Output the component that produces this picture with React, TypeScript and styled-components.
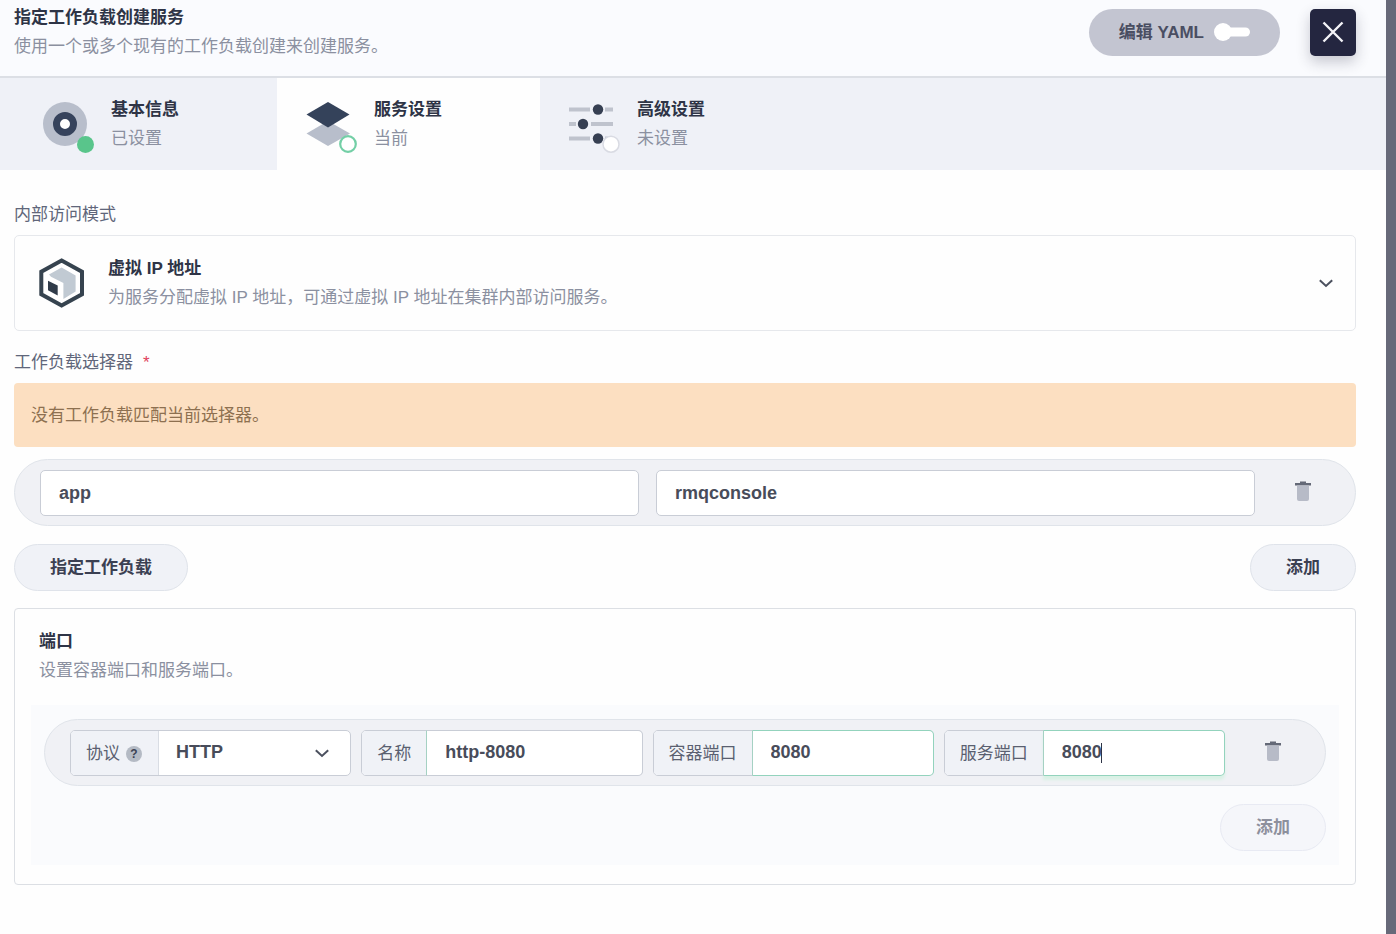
import React from 'react';
import styled, { createGlobalStyle, css } from 'styled-components';

const GlobalStyle = createGlobalStyle`
  *, *::before, *::after { box-sizing: border-box; }
  body {
    margin: 0;
    background: #676979;
    color: #2e3446;
    font-family: "Liberation Sans", "Noto Sans CJK SC", sans-serif;
    font-size: 17px;
    line-height: 29px;
  }
  button, input, select { font: inherit; color: inherit; margin: 0; }
  button { cursor: pointer; }
  h1, h2, h3, p { margin: 0; font-size: 17px; }
`;

const Panel = styled.main`
  min-height: 100vh;
  margin-right: 10px;
  background: #fefefe;
`;

const Header = styled.header`
  display: flex;
  align-items: center;
  gap: 30px;
  padding: 3px 30px 15px 14px;
  border-bottom: 2px solid #dcdfe5;
  background: #fafbfe;
`;

const TextBlock = styled.div`
  flex: 1;
  min-width: 0;
`;

const Title = styled.h1`
  font-weight: 700;
`;

const Muted = styled.p`
  color: #8b90a0;
`;

const YamlButton = styled.button`
  display: flex;
  align-items: center;
  gap: 10px;
  height: 47px;
  padding: 0 30px;
  border: 0;
  border-radius: 24px;
  background: #c3c5d1;
  color: #4a4e62;
  font-weight: 700;
`;

const CloseButton = styled.button`
  display: grid;
  place-items: center;
  width: 46px;
  height: 47px;
  padding: 0;
  border: 0;
  border-radius: 5px;
  background: #242640;
  color: #f4f4f8;
  box-shadow: 0 6px 14px rgba(36, 38, 64, 0.24);
`;

const Tabs = styled.nav`
  display: flex;
  padding-left: 14px;
  background: #eff1f7;
`;

const Tab = styled.button<{ $active?: boolean }>`
  display: flex;
  align-items: center;
  gap: 17px;
  width: 263px;
  height: 92px;
  padding: 0 22px;
  border: 0;
  text-align: left;
  background: ${(p) => (p.$active ? '#fefefe' : 'transparent')};
`;

const TabTitle = styled.strong`
  display: block;
`;

const TabStatus = styled.span`
  display: block;
  color: #8b90a0;
`;

const Content = styled.form`
  padding: 30px 30px 48px 14px;
`;

const FieldLabel = styled.h2`
  margin-bottom: 6px;
  font-weight: 400;
  color: #60667a;
`;

const Required = styled.span`
  margin-left: 10px;
  color: #e0415c;
`;

const ModeButton = styled.button`
  display: flex;
  align-items: center;
  gap: 17px;
  width: 100%;
  height: 96px;
  margin-bottom: 17px;
  padding: 0 18px;
  border: 1px solid #e6e8ec;
  border-radius: 5px;
  background: #fefefe;
  text-align: left;
`;

const Alert = styled.div`
  margin-bottom: 12px;
  padding: 18px 17px 17px;
  border-radius: 4px;
  background: #fcdfc1;
  color: #8d7050;
`;

const Pill = styled.div<{ $gap: number }>`
  display: flex;
  align-items: center;
  gap: ${(p) => p.$gap}px;
  height: 67px;
  padding: 0 28px 0 25px;
  border: 1px solid #e0e4ea;
  border-radius: 34px;
  background: #f0f1f5;
`;

const fieldBox = css`
  height: 46px;
  border: 1px solid #c9cdd6;
  border-radius: 5px;
  background: #fff;
`;

const valueText = css`
  color: #484c5a;
  font-size: 18px;
  font-weight: 700;
  outline: 0;
`;

const PlainInput = styled.input`
  ${fieldBox}
  ${valueText}
  flex: 1;
  min-width: 0;
  padding: 2px 18px 0;
`;

const IconButton = styled.button<{ $space: number }>`
  display: grid;
  place-items: center;
  width: 48px;
  height: 46px;
  margin-left: ${(p) => p.$space}px;
  padding: 0 0 4px;
  border: 0;
  background: transparent;
`;

const Actions = styled.div<{ $end?: boolean }>`
  display: flex;
  justify-content: ${(p) => (p.$end ? 'flex-end' : 'space-between')};
  margin-top: 18px;
`;

const RoundButton = styled.button`
  height: 47px;
  padding: 0 35px;
  border: 1px solid #dfe3ea;
  border-radius: 24px;
  background: #f0f2f7;
  color: #3b4052;
  font-weight: 700;

  &:disabled {
    border-color: #e8eaf3;
    background: #f5f6fa;
    color: #8d909d;
    cursor: default;
  }
`;

const Ports = styled.section`
  margin-top: 17px;
  padding: 18px 16px 19px;
  border: 1px solid #dcdfe4;
  border-radius: 4px;
`;

const PortsHead = styled.div`
  padding: 0 8px;
`;

const PortsBody = styled.div`
  margin-top: 20px;
  padding: 14px 13px;
  background: #fafbfd;
`;

const Group = styled.div`
  ${fieldBox}
  position: relative;
  display: flex;
  flex: 1;
  min-width: 0;
`;

const GroupLabel = styled.label`
  display: flex;
  align-items: center;
  gap: 6px;
  padding: 2px 16px 0 15px;
  border-radius: 4px 0 0 4px;
  background: #f0f2f7;
  color: #5a5f70;
  white-space: nowrap;
`;

const ValueBox = styled.div`
  position: relative;
  display: flex;
  flex: 1;
  min-width: 0;
  margin: -1px;
`;

const GroupInput = styled.input<{ $state?: 'valid' | 'focus' }>`
  ${valueText}
  flex: 1;
  width: 0;
  min-width: 0;
  padding: 0 18px;
  border: 1px solid ${(p) => (p.$state ? '#93d3bd' : '#c9cdd6')};
  border-left-color: #a5d1c3;
  border-radius: 0 5px 5px 0;
  background: #fff;
  box-shadow: ${(p) => (p.$state === 'focus' ? '0 4px 3px #d9f1e5' : 'none')};
`;

const Caret = styled.span`
  position: absolute;
  left: 58px;
  top: 13px;
  width: 1px;
  height: 20px;
  background: #2e3446;
`;

const GroupSelect = styled.select`
  ${valueText}
  flex: 1;
  width: 0;
  min-width: 0;
  padding: 0 17px;
  border: 0;
  border-left: 1px solid #d9dde4;
  background: transparent;
  appearance: none;
`;

const SelectArrow = styled.span`
  position: absolute;
  right: 17px;
  top: 50%;
  display: flex;
  transform: translateY(-50%);
  pointer-events: none;
`;

const Help = styled.span`
  display: grid;
  place-items: center;
  width: 16px;
  height: 16px;
  border-radius: 50%;
  background: #b4bac4;
  color: #3b4254;
  font-size: 12px;
  font-weight: 700;
  line-height: 16px;
`;

const Chevron = () => (
  <svg width="22" height="22" viewBox="0 0 22 22" fill="none" stroke="#4b505e" strokeWidth="2" aria-hidden="true">
    <path d="M4.800 8.200 11 14l6.200-5.800" />
  </svg>
);

const Trash = () => (
  <svg width="20" height="22" viewBox="0 0 20 22" aria-hidden="true">
    <path fill="#646977" d="M2 3h5V1.500h6V3h5v2.500H2z" />
    <path fill="#b7bbc7" d="M4 5.500h12V19a2 2 0 0 1-2 2H6a2 2 0 0 1-2-2z" />
  </svg>
);

const ToggleIcon = () => (
  <svg width="36" height="20" viewBox="0 0 36 20" fill="#fff" aria-hidden="true">
    <circle cx="9" cy="10" r="9" />
    <rect x="9" y="5.500" width="27" height="9" rx="4.500" />
  </svg>
);

const CloseIcon = () => (
  <svg width="24" height="24" viewBox="0 0 24 24" fill="none" stroke="currentColor" strokeWidth="2.400" aria-hidden="true">
    <path d="M2.500 2.500l19 19M21.500 2.500l-19 19" />
  </svg>
);

const BasicIcon = () => (
  <svg width="58" height="58" viewBox="0 0 58 58" aria-hidden="true">
    <circle cx="29" cy="29" r="22" fill="#b8becb" />
    <circle cx="29" cy="29" r="8.500" fill="#fff" stroke="#36435c" strokeWidth="7" />
    <circle cx="49.500" cy="49.500" r="8.500" fill="#59c58b" />
  </svg>
);

const LayersIcon = () => (
  <svg width="58" height="58" viewBox="0 0 58 58" aria-hidden="true">
    <path fill="#b8becb" d="M29 26l22 12.500L29 51 7.500 38.500z" />
    <path fill="#34425a" d="M29 7l21.500 12.500L29 32.500 7.500 19.500z" />
    <circle cx="49" cy="49" r="7.800" fill="#fff" stroke="#73cfa6" strokeWidth="2.200" />
  </svg>
);

const SlidersIcon = () => (
  <svg width="58" height="58" viewBox="0 0 58 58" aria-hidden="true">
    <path stroke="#bfc3cd" strokeWidth="4" d="M7 14.500h21M43 14.500h8M7 29h7M29 29h22M7 43.500h21M43 43.500h8" />
    <g fill="#363f52">
      <circle cx="36" cy="14.500" r="5.200" />
      <circle cx="21" cy="29" r="5.200" />
      <circle cx="36" cy="43.500" r="5.200" />
    </g>
    <circle cx="49" cy="49.200" r="8" fill="#fff" stroke="#d9dbe3" strokeWidth="1.500" />
  </svg>
);

const CubeIcon = () => (
  <svg width="58" height="58" viewBox="0 0 58 58" aria-hidden="true">
    <path fill="#fff" stroke="#36434f" strokeWidth="4" d="M28.600 6.500l20.400 11.300v22.400L28.600 51.500 8.300 40.200V17.800z" />
    <path fill="#c1cad3" d="M28.600 13.500l14 8v16l-12.200 7.500V29L18 22.800l-2-2.300z" />
    <path fill="#303b49" d="M15 26.800l9.700 4.700V41.500L15 36.300z" />
  </svg>
);

const steps = [
  { title: '基本信息', status: '已设置', Icon: BasicIcon },
  { title: '服务设置', status: '当前', Icon: LayersIcon, active: true },
  { title: '高级设置', status: '未设置', Icon: SlidersIcon },
];

export default function App() {
  return (
    <>
      <GlobalStyle />
      <Panel>
        <Header>
          <TextBlock>
            <Title>指定工作负载创建服务</Title>
            <Muted>使用一个或多个现有的工作负载创建来创建服务。</Muted>
          </TextBlock>
          <YamlButton type="button">
            编辑 YAML
            <ToggleIcon />
          </YamlButton>
          <CloseButton type="button" aria-label="关闭">
            <CloseIcon />
          </CloseButton>
        </Header>

        <Tabs>
          {steps.map(({ title, status, Icon, active }) => (
            <Tab key={title} type="button" $active={active} aria-current={active ? 'step' : undefined}>
              <Icon />
              <span>
                <TabTitle>{title}</TabTitle>
                <TabStatus>{status}</TabStatus>
              </span>
            </Tab>
          ))}
        </Tabs>

        <Content onSubmit={(e) => e.preventDefault()}>
          <FieldLabel>内部访问模式</FieldLabel>
          <ModeButton type="button" aria-haspopup="listbox">
            <CubeIcon />
            <TextBlock>
              <TabTitle>虚拟 IP 地址</TabTitle>
              <TabStatus>为服务分配虚拟 IP 地址，可通过虚拟 IP 地址在集群内部访问服务。</TabStatus>
            </TextBlock>
            <Chevron />
          </ModeButton>

          <FieldLabel>
            工作负载选择器
            <Required>*</Required>
          </FieldLabel>
          <Alert role="alert">没有工作负载匹配当前选择器。</Alert>
          <Pill $gap={17}>
            <PlainInput aria-label="键" defaultValue="app" />
            <PlainInput aria-label="值" defaultValue="rmqconsole" />
            <IconButton type="button" $space={7} aria-label="删除">
              <Trash />
            </IconButton>
          </Pill>
          <Actions>
            <RoundButton type="button">指定工作负载</RoundButton>
            <RoundButton type="button">添加</RoundButton>
          </Actions>

          <Ports>
            <PortsHead>
              <Title as="h2">端口</Title>
              <Muted>设置容器端口和服务端口。</Muted>
            </PortsHead>
            <PortsBody>
              <Pill $gap={10}>
                <Group>
                  <GroupLabel htmlFor="protocol">
                    协议
                    <Help>?</Help>
                  </GroupLabel>
                  <GroupSelect id="protocol" defaultValue="HTTP">
                    <option>HTTP</option>
                  </GroupSelect>
                  <SelectArrow>
                    <Chevron />
                  </SelectArrow>
                </Group>
                <Group>
                  <GroupLabel htmlFor="port-name">名称</GroupLabel>
                  <ValueBox>
                    <GroupInput id="port-name" defaultValue="http-8080" />
                  </ValueBox>
                </Group>
                <Group>
                  <GroupLabel htmlFor="container-port">容器端口</GroupLabel>
                  <ValueBox>
                    <GroupInput id="container-port" $state="valid" defaultValue="8080" />
                  </ValueBox>
                </Group>
                <Group>
                  <GroupLabel htmlFor="service-port">服务端口</GroupLabel>
                  <ValueBox>
                    <GroupInput id="service-port" $state="focus" defaultValue="8080" />
                    <Caret />
                  </ValueBox>
                </Group>
                <IconButton type="button" $space={14} aria-label="删除">
                  <Trash />
                </IconButton>
              </Pill>
              <Actions $end>
                <RoundButton type="button" disabled>
                  添加
                </RoundButton>
              </Actions>
            </PortsBody>
          </Ports>
        </Content>
      </Panel>
    </>
  );
}
